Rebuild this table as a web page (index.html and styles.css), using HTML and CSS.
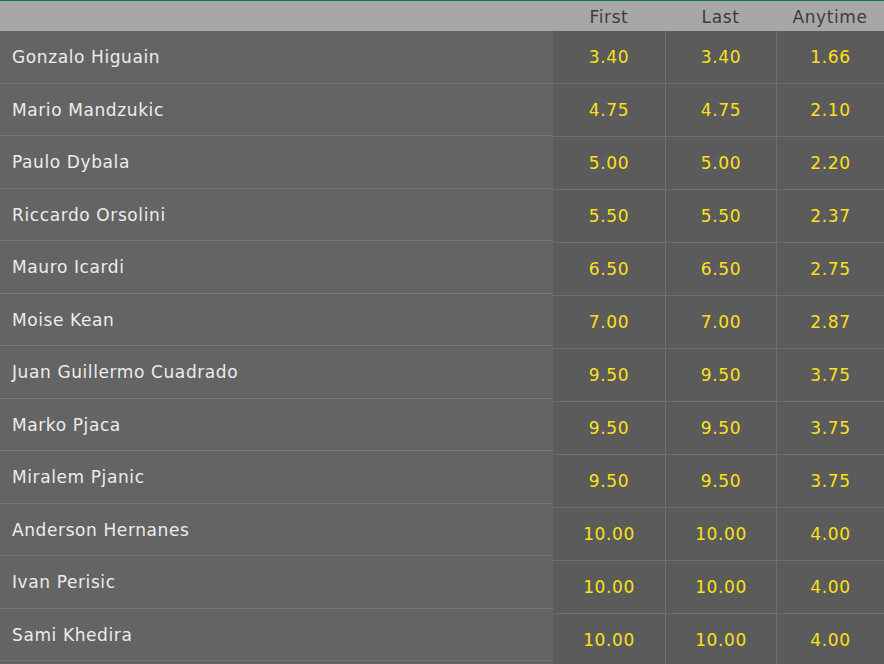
FILE: index.html
```html
<!DOCTYPE html>
<html>
<head>
<meta charset="utf-8">
<link rel="stylesheet" href="styles.css">
</head>
<body>
<div class="market">
  <div class="head">
    <div class="head-name"></div>
    <div class="head-col">First</div>
    <div class="head-col">Last</div>
    <div class="head-col">Anytime</div>
  </div>
  <div class="body">
    <ul class="names">
      <li>Gonzalo Higuain</li>
      <li>Mario Mandzukic</li>
      <li>Paulo Dybala</li>
      <li>Riccardo Orsolini</li>
      <li>Mauro Icardi</li>
      <li>Moise Kean</li>
      <li>Juan Guillermo Cuadrado</li>
      <li>Marko Pjaca</li>
      <li>Miralem Pjanic</li>
      <li>Anderson Hernanes</li>
      <li>Ivan Perisic</li>
      <li>Sami Khedira</li>
    </ul>
    <div class="odds">
      <span>3.40</span><span>3.40</span><span>1.66</span>
      <span>4.75</span><span>4.75</span><span>2.10</span>
      <span>5.00</span><span>5.00</span><span>2.20</span>
      <span>5.50</span><span>5.50</span><span>2.37</span>
      <span>6.50</span><span>6.50</span><span>2.75</span>
      <span>7.00</span><span>7.00</span><span>2.87</span>
      <span>9.50</span><span>9.50</span><span>3.75</span>
      <span>9.50</span><span>9.50</span><span>3.75</span>
      <span>9.50</span><span>9.50</span><span>3.75</span>
      <span>10.00</span><span>10.00</span><span>4.00</span>
      <span>10.00</span><span>10.00</span><span>4.00</span>
      <span>10.00</span><span>10.00</span><span>4.00</span>
    </div>
  </div>
</div>
</body>
</html>
```
FILE: styles.css
```css
html, body {
  margin: 0;
  padding: 0;
  background: #646464;
  overflow: hidden;
}
.market {
  width: 884px;
  height: 664px;
  font-family: "DejaVu Sans", Verdana, sans-serif;
  font-size: 17px;
  letter-spacing: 0.6px;
  border-top: 1px solid #0e7a57;
  box-sizing: border-box;
}
.head {
  display: grid;
  grid-template-columns: 553px 112px 111px 108px;
  height: 30px;
  background: #a7a7a7;
  color: #3c3c3c;
  align-items: center;
}
.head-col {
  text-align: center;
  padding-top: 2px;
}
.body {
  display: flex;
  align-items: flex-start;
}
.names {
  list-style: none;
  margin: 0;
  padding: 0;
  width: 553px;
  flex: none;
}
.names li {
  height: 52.5px;
  box-sizing: border-box;
  border-bottom: 1px solid #777777;
  display: flex;
  align-items: center;
  padding-left: 12px;
  padding-top: 1px;
  color: #ececec;
}
.odds {
  display: grid;
  grid-template-columns: 112px 111px 108px;
  grid-auto-rows: 53px;
  flex: none;
}
.odds span {
  background: #5b5b5b;
  color: #ffe01a;
  border-bottom: 1px solid #6e6e6e;
  border-left: 1px solid #6e6e6e;
  box-sizing: border-box;
  display: flex;
  align-items: center;
  justify-content: center;
}
.odds span:nth-child(3n+1) {
  border-left: none;
}
```
